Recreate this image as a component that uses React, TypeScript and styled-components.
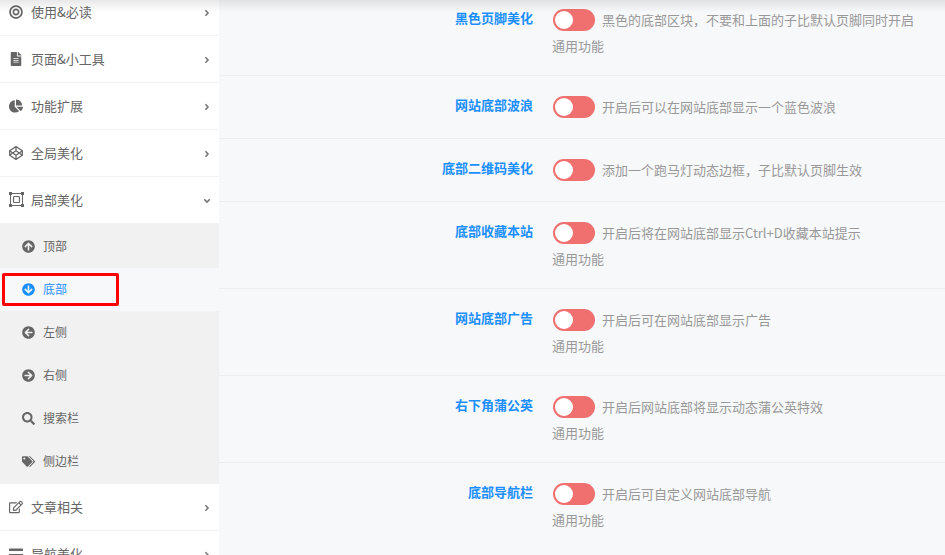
import React from "react";
import styled, { createGlobalStyle } from "styled-components";
import {
  FaBullseye, FaFileAlt, FaChartPie, FaCodepen, FaArrowCircleUp, FaArrowCircleDown,
  FaArrowCircleLeft, FaArrowCircleRight, FaSearch, FaTags, FaRegEdit, FaCreditCard, FaAngleRight, FaAngleDown,
} from "react-icons/fa";

const Global = createGlobalStyle`
  html, body { margin: 0; padding: 0; height: 100%; overflow: hidden; background: #f7f8fa; }
  * { box-sizing: border-box; }
  body { font-family: "Noto Sans CJK SC", "Liberation Sans", sans-serif; }
`;

const Page = styled.div`
  position: relative;
  display: flex;
  width: 945px;
  height: 555px;
  overflow: hidden;
  background: #f7f8fa;
`;

const TopShade = styled.div`
  position: absolute;
  top: 0; left: 0; right: 0;
  height: 12px;
  background: linear-gradient(to bottom, rgba(0,0,0,.09), rgba(0,0,0,0));
  pointer-events: none;
`;

const Sidebar = styled.nav`
  flex: 0 0 219px;
  margin-top: -11px;
  background: #fff;
`;

const MenuItem = styled.div`
  display: flex;
  align-items: center;
  height: 47px;
  padding: 0 7px 2px 9px;
  border-bottom: 1px solid #f1f2f4;
  color: #666;
  font-size: 13px;
`;

const MenuIcon = styled.span`
  flex: 0 0 22px;
  display: flex;
  align-items: center;
  margin-top: 1px;
  color: #666;
  font-size: 14px;
`;

const MenuLabel = styled.span`
  flex: 1;
`;

const Caret = styled.span`
  display: flex;
  margin-top: 3px;
  color: #777;
  font-size: 10px;
`;

const SubMenu = styled.div`
  padding: 1px 0;
  background: #f1f1f1;
`;

const SubItem = styled.div<{ $active?: boolean }>`
  position: relative;
  display: flex;
  align-items: center;
  height: 43px;
  padding: 0 0 2px 22px;
  font-size: 12px;
  color: ${(p) => (p.$active ? "#1a8fff" : "#666")};
  background: ${(p) => (p.$active ? "#f7f8fa" : "transparent")};
`;

const SubIcon = styled.span`
  flex: 0 0 21px;
  display: flex;
  align-items: center;
  margin-top: 2px;
  font-size: 13px;
`;

const Marker = styled.span`
  position: absolute;
  left: 2px;
  top: 5px;
  width: 117px;
  height: 33px;
  border: 3px solid #f00;
  border-radius: 2px;
`;

const Content = styled.main`
  flex: 1;
  margin-top: -11px;
`;

const Row = styled.section<{ $tall?: boolean }>`
  display: grid;
  grid-template-columns: 314px 1fr;
  column-gap: 20px;
  align-content: start;
  padding-top: 20px;
  border-bottom: 1px solid #ecedef;
  min-height: ${(p) => (p.$tall ? "87px" : "63px")};
  &:last-child { border-bottom: none; }
`;

const Label = styled.div`
  text-align: right;
  font-size: 13px;
  font-weight: 700;
  color: #1a8fff;
  line-height: 18px;
`;

const Body = styled.div`
  color: #999;
  font-size: 13px;
`;

const Line = styled.div`
  display: flex;
  align-items: center;
  gap: 7px;
  height: 22px;
`;

const Desc = styled.span`
  margin-top: -2px;
`;

const Switch = styled.span`
  flex: 0 0 42px;
  height: 22px;
  padding: 2px;
  border-radius: 11px;
  background: #f07070;
`;

const Knob = styled.span`
  display: block;
  width: 18px;
  height: 18px;
  border-radius: 50%;
  background: #fff;
`;

const Note = styled.div`
  margin-top: 5px;
  margin-left: -1px;
  line-height: 20px;
  color: #999;
`;

const FrameIcon = () => (
  <svg width="15" height="15" viewBox="0 0 15 15" fill="none" stroke="currentColor">
    <rect x="1.5" y="1.5" width="12" height="12" strokeWidth="1" />
    <rect x="4.5" y="4.5" width="6" height="6" rx="1" strokeWidth="1.2" />
    <g fill="currentColor" stroke="none">
      <rect x="0" y="0" width="3" height="3" />
      <rect x="12" y="0" width="3" height="3" />
      <rect x="0" y="12" width="3" height="3" />
      <rect x="12" y="12" width="3" height="3" />
    </g>
  </svg>
);

const main: [React.ReactNode, string, boolean?][] = [
  [<FaBullseye />, "使用&必读"],
  [<FaFileAlt />, "页面&小工具"],
  [<FaChartPie />, "功能扩展"],
  [<FaCodepen />, "全局美化"],
  [<FrameIcon />, "局部美化", true],
];

const subs: [React.ReactNode, string, boolean?][] = [
  [<FaArrowCircleUp />, "顶部"],
  [<FaArrowCircleDown />, "底部", true],
  [<FaArrowCircleLeft />, "左侧"],
  [<FaArrowCircleRight />, "右侧"],
  [<FaSearch />, "搜索栏"],
  [<FaTags />, "侧边栏"],
];

const rows: [string, string, boolean][] = [
  ["黑色页脚美化", "黑色的底部区块，不要和上面的子比默认页脚同时开启", true],
  ["网站底部波浪", "开启后可以在网站底部显示一个蓝色波浪", false],
  ["底部二维码美化", "添加一个跑马灯动态边框，子比默认页脚生效", false],
  ["底部收藏本站", "开启后将在网站底部显示Ctrl+D收藏本站提示", true],
  ["网站底部广告", "开启后可在网站底部显示广告", true],
  ["右下角蒲公英", "开启后网站底部将显示动态蒲公英特效", true],
  ["底部导航栏", "开启后可自定义网站底部导航", true],
];

function Item({ icon, label, open }: { icon: React.ReactNode; label: string; open?: boolean }) {
  return (
    <MenuItem>
      <MenuIcon>{icon}</MenuIcon>
      <MenuLabel>{label}</MenuLabel>
      <Caret>{open ? <FaAngleDown /> : <FaAngleRight />}</Caret>
    </MenuItem>
  );
}

export default function App() {
  return (
    <Page>
      <Global />
      <Sidebar>
        {main.map(([i, l, o]) => <Item key={l} icon={i} label={l} open={o} />)}
        <SubMenu>
          {subs.map(([i, l, a]) => (
            <SubItem key={l} $active={a}>
              <SubIcon>{i}</SubIcon>
              {l}
              {a && <Marker />}
            </SubItem>
          ))}
        </SubMenu>
        <Item icon={<FaRegEdit />} label="文章相关" />
        <Item icon={<FaCreditCard />} label="导航美化" />
      </Sidebar>
      <Content>
        {rows.map(([l, d, tall]) => (
          <Row key={l} $tall={tall}>
            <Label>{l}</Label>
            <Body>
              <Line>
                <Switch><Knob /></Switch>
                <Desc>{d}</Desc>
              </Line>
              {tall && <Note>通用功能</Note>}
            </Body>
          </Row>
        ))}
      </Content>
      <TopShade />
    </Page>
  );
}
